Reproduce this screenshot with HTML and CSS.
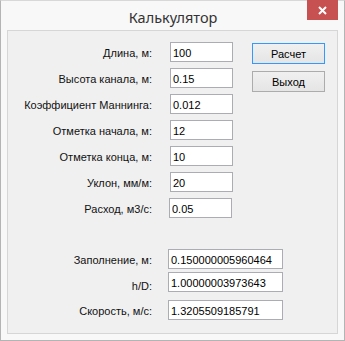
FILE: index.html
```html
<!DOCTYPE html>
<html lang="ru">
  <head>
    <meta charset="UTF-8" />
    <title>Калькулятор</title>
    <link rel="stylesheet" href="styles.css">
  </head>
  <body>
    <div class="window">
      <div class="titlebar">
        <span class="title">Калькулятор</span>
        <button class="close" aria-label="Закрыть">
          <svg width="9" height="9" viewBox="0 0 9 9">
            <path d="M1 1 L8 8 M8 1 L1 8" stroke="#fff" stroke-width="2" />
          </svg>
        </button>
      </div>

      <div class="client">
        <!-- исходные данные -->
        <div class="inputs">
          <label class="lbl">Длина, м:</label>
          <input class="box" value="100">
          <label class="lbl">Высота канала, м:</label>
          <input class="box" value="0.15">
          <label class="lbl">Коэффициент Маннинга:</label>
          <input class="box" value="0.012">
          <label class="lbl">Отметка начала, м:</label>
          <input class="box" value="12">
          <label class="lbl">Отметка конца, м:</label>
          <input class="box" value="10">
          <label class="lbl">Уклон, мм/м:</label>
          <input class="box" value="20">
          <label class="lbl">Расход, м3/с:</label>
          <input class="box box-shift" value="0.05">

          <div class="buttons">
            <button class="btn btn-default">Расчет</button>
            <button class="btn">Выход</button>
          </div>
        </div>

        <!-- результаты -->
        <div class="outputs">
          <label class="lbl">Заполнение, м:</label>
          <input class="box wide" value="0.150000005960464" readonly>
          <label class="lbl lbl-low">h/D:</label>
          <input class="box wide" value="1.00000003973643" readonly>
          <label class="lbl lbl-low2 gap-top">Скорость, м/с:</label>
          <input class="box wide gap-top" value="1.3205509185791" readonly>
        </div>
      </div>
    </div>
  </body>
</html>
```

FILE: styles.css
```css
* {
  box-sizing: border-box;
}

body {
  margin: 0;
  background: #fff;
  font-family: "Liberation Sans", Arial, sans-serif;
}

/* окно */
.window {
  width: 345px;
  height: 341px;
  background: #f8f8f8;
  border: 1px solid #b4b4b4;
  border-top-color: #d8d8d8;
  display: flex;
  flex-direction: column;
}

.titlebar {
  position: relative;
  height: 29px;
  text-align: center;
}
.title {
  display: inline-block;
  padding-top: 6px;
  padding-left: 1px;
  font-family: "Noto Sans", "Open Sans", sans-serif;
  font-size: 14.5px;
  color: #333;
}
.close {
  position: absolute;
  top: -1px;
  right: 6px;
  width: 31px;
  height: 20px;
  border: 0;
  padding: 0;
  background: #c75050;
  display: flex;
  align-items: center;
  justify-content: center;
}

.client {
  flex: 1;
  margin: 0 6px 6px;
  background: #f0f0f0;
  border: 1px solid #d6d6d6;
  padding-top: 11px;
}

/* сетка полей */
.inputs {
  display: grid;
  grid-template-columns: 144px 63px 73px;
  grid-auto-rows: 20px;
  column-gap: 18px;
  row-gap: 6px;
}
.inputs .lbl {
  grid-column: 1;
}
.inputs .box {
  grid-column: 2;
}
.buttons {
  grid-column: 3;
  grid-row: 1 / span 3;
  margin-left: 1px;
  padding-top: 1px;
  display: flex;
  flex-direction: column;
  gap: 7px;
}

.outputs {
  display: grid;
  grid-template-columns: 144px 115px;
  column-gap: 16px;
  row-gap: 3px;
  grid-auto-rows: 20px;
  margin-top: 31px;
}

.lbl {
  font-size: 11px;
  color: #111;
  text-align: right;
  align-self: center;
  padding-top: 2px;
}
.lbl-low {
  padding-top: 8px;
}
.lbl-low2 {
  padding-top: 7px;
}
.gap-top {
  margin-top: 5px;
}

.box {
  width: 63px;
  height: 20px;
  border: 1px solid #abadb3;
  background: #fff;
  padding: 1px 0 0 2px;
  font-family: "Liberation Sans", Arial, sans-serif;
  font-size: 11px;
  color: #000;
  outline: none;
}
.box.wide {
  width: 115px;
}
.box-shift {
  margin-left: -1px;
}

.btn {
  height: 21px;
  width: 73px;
  border: 1px solid #acacac;
  background: linear-gradient(#f0f0f0, #e5e5e5);
  font-family: "Liberation Sans", Arial, sans-serif;
  font-size: 11px;
  color: #000;
  padding: 0;
}
.btn-default {
  border-color: #3399ff;
}
```
